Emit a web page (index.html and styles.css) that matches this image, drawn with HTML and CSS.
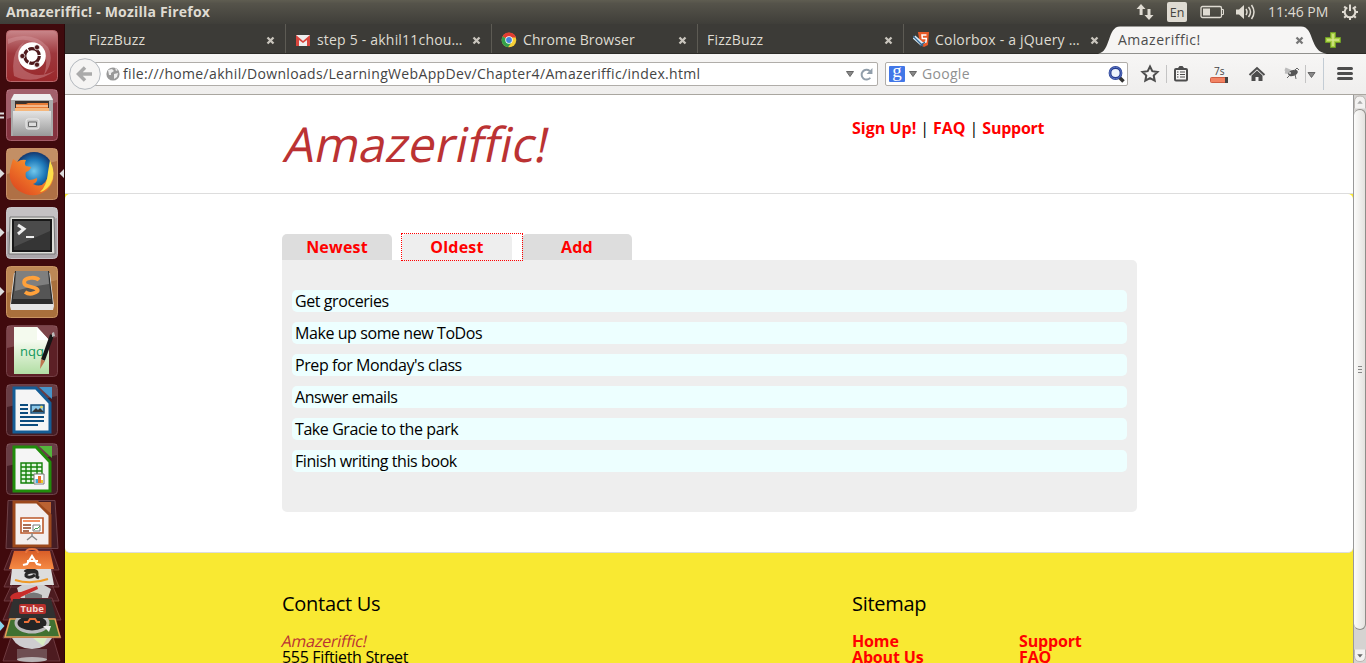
FILE: index.html
```html
<!DOCTYPE html>
<html lang="en">
<head>
<meta charset="utf-8">
<title>Amazeriffic!</title>
<link rel="stylesheet" href="styles.css">
</head>
<body>
<div class="desktop">
  <header class="topbar">
    <span class="window-title">Amazeriffic! - Mozilla Firefox</span>
    <div class="indicators">
      <svg width="18" height="18" viewBox="0 0 18 18"><g fill="#dfdbd2"><path d="M5 1L9.500 6H6.600V12H3.600V6H.5zM13 17L8.500 12H11.500V6H14.500V12H17.500z"/></g></svg>
      <span class="lang">En</span>
      <svg class="battery" width="25" height="14" viewBox="0 0 25 14"><rect x="1" y="1.500" width="20.500" height="11" rx="1.500" fill="none" stroke="#dfdbd2" stroke-width="1.300"/><path d="M3 3.500h7v7H3z" fill="#dfdbd2"/><path d="M22 4.500h1.500v5H22" fill="none" stroke="#dfdbd2"/></svg>
      <svg class="sound" width="21" height="18" viewBox="0 0 21 18"><path d="M1 6.500h3L9 2v14L4 11.500H1z" fill="#dfdbd2"/><path d="M11 6q2 3 0 6M13.500 4q4 5 0 10M16.500 2q5 7 0 14" fill="none" stroke="#dfdbd2" stroke-width="1.500"/></svg>
      <span class="clock">11:46 PM</span>
      <svg width="18" height="18" viewBox="0 0 18 18"><g stroke="#dfdbd2" fill="none" stroke-width="2"><path d="M6.300 4.500a5.300 5.300 0 1 0 5.400 0M9 1.500V8"/><path d="M1 9h3M14 9h3M9 14v3M3.200 3.500l2 2M14.800 3.500l-2 2M3.200 14.700l2-2M14.800 14.700l-2-2"/></g></svg>
    </div>
  </header>

  <div class="workspace">
    <nav class="launcher">
      <svg class="tile" viewBox="0 0 52 52"><defs><linearGradient id="dash" x2="0" y2="1"><stop stop-color="#c9868a"/><stop offset=".45" stop-color="#9e383d"/><stop offset="1" stop-color="#9a282b"/></linearGradient><linearGradient id="metal" x2="0" y2="1"><stop stop-color="#e4e4e4"/><stop offset="1" stop-color="#999"/></linearGradient></defs>
        <rect x=".5" y=".5" width="51" height="51" rx="4" fill="url(#dash)" stroke="#b9686c"/>
        <path d="M2 9Q27 0 42 17Q49 31 38 45Q44 26 34 17Q21 4 2 14z" fill="#d9a0a4" opacity=".4"/><path d="M8 46Q4 22 18 12Q8 30 18 40Q32 50 50 40Q29 56 8 46" fill="#d9a0a4" opacity=".4"/>
        <circle cx="26" cy="26" r="13.800" fill="#fff"/><circle cx="26" cy="26" r="7.300" fill="none" stroke="#4e191c" stroke-width="3.200" stroke-dasharray="14 1.300"/><g fill="#4e191c" stroke="#fff" stroke-width=".7"><circle cx="16.400" cy="26" r="2.600"/><circle cx="31" cy="17.300" r="2.600"/><circle cx="31" cy="34.700" r="2.600"/></g></svg>
      <svg class="tile" viewBox="0 0 52 52"><rect x=".5" y=".5" width="51" height="51" rx="4" fill="#84333f" stroke="#a45d69"/><path d="M1 1h50v12L1 30z" fill="#d9b5bd" opacity=".35"/>
        <path d="M8 5h36l3 5v37H5V10z" fill="#aaa"/><path d="M8 5h36l3 6H5z" fill="#eee"/><path d="M9 12h34v10H9z" fill="#3a302c"/><path d="M10 15h10l2-1h20v8H10z" fill="#e87c36"/><path d="M10 17h32" stroke="#fff2dd"/><path d="M9 19h34v3H9z" fill="#f5b77c"/><path d="M7 22h38v25H7z" fill="url(#metal)"/><rect x="20" y="30" width="13" height="10" rx="2" fill="#c7c7c7" stroke="#eee"/><path d="M22.500 33h8v4.500h-8z" fill="#ddd" stroke="#666"/></svg>
      <svg class="tile" viewBox="0 0 52 52"><defs><radialGradient id="globe"><stop stop-color="#72c8ec"/><stop offset=".6" stop-color="#1d78b9"/><stop offset="1" stop-color="#12376f"/></radialGradient><linearGradient id="fox" x1="0" x2="1" y1="1" y2="0"><stop stop-color="#d83c1e"/><stop offset=".6" stop-color="#f4822a"/><stop offset="1" stop-color="#ffe04c"/></linearGradient></defs>
        <rect x=".5" y=".5" width="51" height="51" rx="4" fill="#af7045" stroke="#c69068"/><path d="M1 1h50v12L1 26z" fill="#e0bd97" opacity=".4"/><circle cx="28" cy="23" r="19" fill="url(#globe)"/>
        <path d="M7 11Q9 12 11 14Q15 11 20 12Q18 16 20 18L25 19Q24 23 20 24Q18 29 23 32Q27 32 31 30Q32 34 27 36Q39 42 43 25L44 15Q52 31 41 42Q28 52 13 43Q0 34 5 18z" fill="url(#fox)"/><path d="M44 12Q51 26 44 37Q38 44 34 44Q41 38 42 24z" fill="#ffdf49"/></svg>
      <svg class="tile" viewBox="0 0 52 52"><rect x=".5" y=".5" width="51" height="51" rx="4" fill="#aaa5a9" stroke="#c7c2c6"/><path d="M1 1h50v10L1 25z" fill="#ddd" opacity=".5"/><path d="M4 10h44l1 37H3z" fill="#deded9" stroke="#777"/><path d="M7 13h38v31H7z" fill="#353535" stroke="#181818" stroke-width="2"/><path d="M8 14h36v10L8 40z" fill="#666" opacity=".45"/><path d="M12 18l6 4-6 5" fill="none" stroke="#eee" stroke-width="3"/><path d="M20 30h8" stroke="#eee" stroke-width="2"/></svg>
      <svg class="tile" viewBox="0 0 52 52"><rect x=".5" y=".5" width="51" height="51" rx="4" fill="#a96f3c" stroke="#c99462"/><path d="M1 1h50v13L1 27z" fill="#e2b887" opacity=".35"/><path d="M8 7h36l4 33-1 4H5l-1-4z" fill="#e4e4e4"/><path d="M9 5h34l4 33H5z" fill="#2c2c2c"/><path d="M10 5h32l3 28H7z" fill="#555"/><path d="M10 5h32l1 13Q26 20 9 25z" fill="#aaa" opacity=".5"/><path d="M33 14Q30 11 24 12C16 13 17 19 22 20L29 22Q35 25 28 27Q23 29 19 26" stroke="#ffa13b" stroke-width="3.800" fill="none"/></svg>
      <svg class="tile" viewBox="0 0 52 52"><defs><linearGradient id="note" x2="0" y2="1"><stop offset=".3" stop-color="#f4faee"/><stop offset="1" stop-color="#b2dea4"/></linearGradient></defs><rect x=".5" y=".5" width="51" height="51" rx="4" fill="#5c2026" stroke="#744046"/><path d="M1 1h50v11L1 23z" fill="#b98b91" opacity=".35"/><path d="M8 2h23l12 13v34H8z" fill="url(#note)"/><path d="M31 2v13h12z" fill="#fff"/><text class="nqq" x="14" y="31">nqq</text><path d="M46 10L37 35" stroke="#161616" stroke-width="4"/><path d="M46 8l2-1 1 4-3 1z" fill="#bbb"/><path d="M35 34l4 2-5 8z" fill="#bd7550"/></svg>
      <svg class="tile" viewBox="0 0 52 52"><rect x=".5" y=".5" width="51" height="51" rx="4" fill="#451d24" stroke="#6f4248"/><path d="M1 1h50v11L1 23z" fill="#b98b91" opacity=".3"/><path d="M8 4h22l14 15v29H8z" fill="#f5f5f5" stroke="#155d96" stroke-width="3"/><path d="M33 3h13v12z" fill="#4794c9"/><path d="M14 21h8M14 25h8M14 29h8M14 33h24M14 37h24M14 41h18" stroke="#0c4c7e" stroke-width="2"/><path d="M25 21h13v8H25z" fill="#8ac7e7" stroke="#164d79" stroke-width="1.500"/><path d="M26 28l4-4 2 2 2-2 4 4z" fill="#333"/><circle cx="35.500" cy="23" r="1.300" fill="#ead34f"/></svg>
      <svg class="tile" viewBox="0 0 52 52"><rect x=".5" y=".5" width="51" height="51" rx="4" fill="#451d24" stroke="#6f4248"/><path d="M1 1h50v11L1 23z" fill="#b98b91" opacity=".3"/><path d="M8 4h22l14 15v29H8z" fill="#f5f5f5" stroke="#218c0b" stroke-width="3"/><path d="M33 3h13v12z" fill="#54b53c"/><path d="M15 20h21v20H15zM15 24h21M15 28h21M15 32h21M15 36h21M20 20v20M25 20v20M31 20v20" fill="#e2f6df" stroke="#138009" stroke-width="1.400"/><path d="M28 31h10v10H28z" fill="#fff" stroke="#777"/><path d="M29.500 40v-4H32v4" fill="#44a6d6"/><path d="M32 40v-7h3v7" fill="#ea742a"/><path d="M35 40v-3h2v3" fill="#eac629"/></svg>
      <svg class="stack" viewBox="0 0 64 163"><defs><linearGradient id="orange" x2="0" y2="1"><stop stop-color="#d95e28"/><stop offset="1" stop-color="#f58a44"/></linearGradient></defs>
        <path d="M8 .5h47l3 48H6z" fill="#451d24" stroke="#6f4248"/><path d="M14 2h23l13 13v31H14z" fill="#f4eeee" stroke="#9c481c" stroke-width="3"/><path d="M38 2h13v12z" fill="#ba6232"/><path d="M21 18h22v15H21z" fill="#fff" stroke="#bb582b" stroke-width="1.600"/><path d="M23 21h17" stroke="#f39261" stroke-width="2"/><path d="M23 25h8M23 28h8M23 31h6" stroke="#91411f" stroke-width="1.500"/><path d="M33 25h7v6h-7z" fill="#fff" stroke="#777"/><path d="M34 30l2-2 1 1 3-3" fill="none" stroke="#44a052"/><path d="M32 33v3M32 36l-5 4M32 36l5 4" stroke="#888" stroke-width="1.500"/>
        <g fill="#4d1b20" stroke="#774249" stroke-width=".8"><path d="M12 50h40l7 20H4zM13 67h38l8 20H4zM13 82h38l8 19H4zM12 98h40l9 22H3zM11 118h42l8 20H3zM12 134h40l8 27H3z"/></g>
        <path d="M12 69h39l3 16H10z" fill="#ddd"/><path d="M25 72q1-2 6-2 6 0 6 3v4l2 1M36 72h-5q-6 1-5 4 3 3 9-1" fill="none" stroke="#282828" stroke-width="3"/><path d="M15 80q16 5 33-1" fill="none" stroke="#ef9a26" stroke-width="2"/>
        <path d="M14 51h36l4 18H9z" fill="url(#orange)"/><path d="M26 53q0-4 6-4t6 4" fill="none" stroke="#e7743e" stroke-width="2"/><path d="M23 65l4-1 5-8 5 8 4 1M27 61h11" fill="none" stroke="#fff" stroke-width="2.200"/>
        <path d="M17 88l5-3h22l7 4-3 9H20z" fill="#d0d0d0"/><path d="M25 95q9-5 17 0v3H25z" fill="#777"/><path d="M10 97q3-5 11-5l16-6 1 3-17 8q-3 6-9 5z" fill="#c92d2b"/>
        <path d="M10 119h45l5 18H5z" fill="#407131" stroke="#e4a158" stroke-width="1.500"/><ellipse cx="32" cy="123" rx="16" ry="9" fill="#252525" stroke="#bbb" stroke-width="3"/><path d="M24 122h4l2-3h5l2 3h3" fill="none" stroke="#ee7139" stroke-width="2"/><path d="M43 126h8l-2 6z" fill="#eee"/>
        <path d="M13 99h38l5 19H8z" fill="#303030"/><rect x="19" y="104" width="27" height="10" rx="2" fill="#b62f2c"/><text class="tube" x="20.500" y="112">Tube</text>
        <path d="M0 121l4.500 5L0 131z" fill="#8ad4ed"/><path d="M12 138h40q-6 11-20 11T12 138" fill="#cfcdd0"/><path d="M33 138h14l-4 8z" fill="#d7edc4"/><path d="M17 149h30v11q-15 5-30 0z" fill="#7c6468" opacity=".7"/><ellipse cx="32" cy="159.500" rx="15" ry="2.500" fill="#b9b3b4"/></svg>
      <svg class="markers" viewBox="0 0 64 300"><g fill="#ddd"><path d="M0 88.500h4v2H0zM0 92.500h4v2H0zM0 145l4.500 4.500L0 154zM64 145l-4.500 4.500L64 154zM0 204l4.500 4.500L0 213zM0 263l4.500 4.500L0 272z"/></g></svg>
    </nav>

    <div class="browser">
      <div class="tabstrip">
        <div class="tab first"><span class="label">FizzBuzz</span><svg class="close" viewBox="0 0 9 9"><path d="M1.500 1.500l6 6M7.500 1.500l-6 6"/></svg></div>
        <div class="tab"><svg class="fav" viewBox="0 0 16 16"><path d="M1 3h14v11H1z" fill="#eee"/><path d="M1 14V3l7 6 7-6v11h-3V8l-4 3-4-3v6z" fill="#d8453d"/></svg><span class="label">step 5 - akhil11chou…</span><svg class="close" viewBox="0 0 9 9"><path d="M1.500 1.500l6 6M7.500 1.500l-6 6"/></svg></div>
        <div class="tab"><svg class="fav" viewBox="0 0 16 16"><circle cx="8" cy="8" r="7.300" fill="#f5cf37"/><path d="M8 8L1.500 4.500A7.300 7.300 0 0 1 15 5.500H8z" fill="#e13c32"/><path d="M8 8L1.500 4.500A7.300 7.300 0 0 0 7 15.300l3-4z" fill="#34a14a"/><circle cx="8" cy="8" r="3.700" fill="#fff"/><circle cx="8" cy="8" r="2.900" fill="#4284d8"/></svg><span class="label chrome">Chrome Browser</span><svg class="close" viewBox="0 0 9 9"><path d="M1.500 1.500l6 6M7.500 1.500l-6 6"/></svg></div>
        <div class="tab"><span class="label">FizzBuzz</span><svg class="close" viewBox="0 0 9 9"><path d="M1.500 1.500l6 6M7.500 1.500l-6 6"/></svg></div>
        <div class="tab"><svg class="fav" viewBox="0 0 16 16"><path d="M5 0h11l-1 13-4 2-4-2z" fill="#e65a28"/><path d="M13.500 3H9l.3 3.500h4L13 10l-3 1" fill="none" stroke="#fff" stroke-width="1.500"/><path d="M1 5l8 7" stroke="#dceefa" stroke-width="4"/><path d="M0 4l10 10M7 14l5-4" stroke="#33658f" stroke-width="1.300"/></svg><span class="label">Colorbox - a jQuery …</span><svg class="close" viewBox="0 0 9 9"><path d="M1.500 1.500l6 6M7.500 1.500l-6 6"/></svg></div>
        <div class="tab active"><svg class="tab-shape" viewBox="0 0 230 29"><path d="M0 29C13 28 9 2 22 2H203C217 2 211 28 229 29z" fill="#f6f5f4"/></svg><span class="label">Amazeriffic!</span><svg class="close" viewBox="0 0 9 9"><path d="M1.500 1.500l6 6M7.500 1.500l-6 6"/></svg></div>
        <svg class="newtab" viewBox="0 0 16 16"><path d="M5.500.5h5v5h5v5h-5v5h-5v-5h-5v-5h5z" fill="#a8cf43" stroke="#6f9d25"/><path d="M8 2v12M2 8h12" stroke="#d3e88a" stroke-width="1.500"/></svg>
      </div>

      <div class="toolbar">
        <svg class="back" viewBox="0 0 32 32"><circle cx="16" cy="16" r="15.300" fill="#f5f4f3" stroke="#b3b8be"/><path d="M16 9.500L9.500 16l6.500 6.500M10 16h13" fill="none" stroke="#aaa" stroke-width="3.500"/></svg>
        <div class="field url">
          <svg class="site" viewBox="0 0 14 14"><circle cx="7" cy="7" r="6.600" fill="#999"/><path d="M2 3l4-1 2 2-3 2v2H3zM8 7l4-1-1 4-3 2zM9 1l3 2-2 1z" fill="#eee"/></svg>
          <span class="address">file:///home/akhil/Downloads/LearningWebAppDev/Chapter4/Amazeriffic/index.html</span>
          <svg class="drop" viewBox="0 0 8 6"><path d="M.5.5h7L4 5.500z" fill="#888" stroke="#666"/></svg>
          <svg class="reload" viewBox="0 0 12 12"><path d="M9.500 9A4.500 4.500 0 1 1 9 2.800" fill="none" stroke="#919eaa" stroke-width="1.800"/><path d="M11.500 0v5.500H6z" fill="#919eaa"/></svg>
        </div>
        <div class="field search">
          <span class="g">g</span>
          <svg class="drop" viewBox="0 0 8 6"><path d="M.5.5h7L4 5.500z" fill="#888" stroke="#666"/></svg>
          <span class="hint">Google</span>
          <svg class="lens" viewBox="0 0 17 17"><path d="M11 11l4.500 4.500" stroke="#333" stroke-width="3.500"/><circle cx="7.500" cy="7" r="5.500" fill="#edf3fc" stroke="#253c91" stroke-width="2.800"/><circle cx="7.500" cy="7" r="5.800" fill="none" stroke="#6c87d1" stroke-width=".8"/></svg>
        </div>
        <svg class="actions" viewBox="0 0 226 40">
          <path d="M10 12.500l2.300 4.700 5.200.7-3.800 3.600 1 5.200-4.700-2.500-4.700 2.500 1-5.200-3.800-3.600 5.200-.7z" fill="none" stroke="#4d4d4d" stroke-width="2"/>
          <path d="M26.500 11v18M165.500 11v18" stroke="#c4c4c4"/><path d="M183.500 4v32" stroke="#c3ccd4"/>
          <rect x="35" y="15" width="12" height="11.500" rx="1" fill="#f6f5f4" stroke="#4d4d4d" stroke-width="2"/><path d="M38 14l1.500-2h3l1.500 2v2h-6z" fill="#4d4d4d"/><path d="M37 18h1.500M40 18h5M37 20.500h1.500M40 20.500h5M37 23h1.500M40 23h5" stroke="#4d4d4d" stroke-width="1.200"/>
          <text class="seconds" x="74" y="21">7s</text><rect x="70.500" y="23.500" width="16" height="5" rx="1" fill="#f28262" stroke="#cf5e42"/><path d="M85 23h3v6h-3z" fill="#444"/>
          <path d="M109.500 21l7.500-7 7.500 7" fill="none" stroke="#4d4d4d" stroke-width="2"/><path d="M111.500 21.500l5.500-5 5.500 5V27h-4v-4h-3v4h-4z" fill="#4d4d4d"/>
          <path d="M145 15l7 3M145 18l7 1" stroke="#bbb" stroke-width="3"/><ellipse cx="153" cy="19" rx="5" ry="3" fill="#555" transform="rotate(-20 153 19)"/><path d="M151 20l-4 4M155 20l1 5M154 17l3-3 2 2" fill="none" stroke="#666"/><circle cx="150" cy="19" r="1" fill="#ddd"/>
          <path d="M168 18.500h7l-3.500 5z" fill="#888" stroke="#666"/>
          <path d="M198.500 14.500h13M198.500 19.500h13M198.500 24.500h13" stroke="#4d4d4d" stroke-width="3" stroke-linecap="round"/>
        </svg>
      </div>

      <div class="viewport">
        <div class="page">
          <div class="site-header"><h1><span>Amazeriffic!</span></h1><div class="site-nav"><a>Sign Up!</a><span>|</span><a>FAQ</a><span>|</span><a class="tight">Support</a></div></div>
          <main class="site-main">
            <div class="tabs"><a>Newest</a><a class="current">Oldest</a><a>Add</a></div>
            <div class="content">
              <p>Get groceries</p>
              <p>Make up some new ToDos</p>
              <p>Prep for Monday's class</p>
              <p>Answer emails</p>
              <p>Take Gracie to the park</p>
              <p>Finish writing this book</p>
            </div>
          </main>
          <footer class="site-footer">
            <div class="contact"><h2>Contact Us</h2><p><em>Amazeriffic!</em><br><span>555 Fiftieth Street</span></p></div>
            <div class="sitemap"><h2>Sitemap</h2><div class="columns"><p><a>Home</a><br><a>About Us</a></p><p><a>Support</a><br><a>FAQ</a></p></div></div>
          </footer>
        </div>
        <div class="scrollbar">
          <svg class="arrow up" viewBox="0 0 13 14"><path d="M.5 14V7Q.5.500 6.500.5T12.500 7v7" fill="#f3f2f1" stroke="#b5b1ad"/><path d="M3.500 9L6.500 5.500 9.500 9z" fill="#aaa"/></svg>
          <div class="thumb"><i></i><i></i><i></i></div>
          <svg class="arrow down" viewBox="0 0 13 14"><path d="M.5 0v6.500q0 6.500 6 6.500t6-6.500V0" fill="#f3f2f1" stroke="#b5b1ad"/><path d="M3.500 5h6l-3 3.500z" fill="#666"/></svg>
        </div>
      </div>
    </div>
  </div>
</div>
</body>
</html>
```

FILE: styles.css
```css
*, *::after { box-sizing: border-box; }
html, body { margin: 0; overflow: hidden; }
body { font: 14px/18px "Open Sans", "Noto Sans", sans-serif; }
svg { display: block; flex: none; }
h1, h2, p { margin: 0; font-weight: 400; }

.desktop { width: 1366px; height: 663px; overflow: hidden; display: flex; flex-direction: column; white-space: nowrap; background: #3c3b37; }
.topbar { height: 24px; flex: none; display: flex; align-items: center; justify-content: space-between; padding: 0 7px 0 6px; color: #dfdbd2; background: linear-gradient(#5f5d51, #55534a 15%, #3f3e39); }
.window-title { font-size: 14px; font-weight: 700; letter-spacing: .2px; }
.indicators { display: flex; align-items: center; }
.lang { width: 20px; height: 20px; margin-left: 13px; background: #dfdbd2; color: #45443f; border-radius: 2px; font-size: 12.500px; line-height: 21px; text-align: center; }
.battery { margin-left: 13px; }
.sound { margin-left: 10px; }
.clock { width: 61px; margin: 0 12px 0 12px; font-size: 14px; }

.workspace { flex: 1; min-height: 0; display: flex; }
.launcher { position: relative; width: 65px; flex: none; padding: 6px 0 0 6px; display: flex; flex-direction: column; background: #400a0d; border-right: 1px solid #2b0709; }
.tile { width: 52px; height: 52px; margin-bottom: 7px; }
.stack { width: 64px; height: 163px; margin: -2px 0 0 -6px; }
.markers { position: absolute; left: 0; top: 0; width: 64px; height: 300px; }
.nqq { font: 13px "Open Sans", sans-serif; fill: #13985c; }
.tube { font: bold 9.500px "Open Sans", sans-serif; fill: #f4d6d2; }

.browser { flex: 1; min-width: 0; display: flex; flex-direction: column; }
.tabstrip { height: 30px; flex: none; display: flex; padding-left: 14px; background: #3c3b37; border-bottom: 1px solid #2d2c28; }
.tab { position: relative; width: 206px; flex: none; display: flex; align-items: center; padding: 3px 10px 0 9px; color: #dfdbd2; border-left: 1px solid #5d5b54; }
.tab.first, .tab.active { border-color: transparent; }
.fav { width: 16px; height: 16px; margin-right: 6px; }
.label { position: relative; font-size: 14px; letter-spacing: .2px; }
.label.chrome { letter-spacing: .1px; }
.close { position: relative; width: 9px; height: 9px; margin-left: auto; stroke: #c9c5bd; stroke-width: 2.300; fill: none; }
.tab.active { color: #4c4c4c; width: 205px; padding-left: 8px; }
.tab.active .label { letter-spacing: .5px; }
.tab.active .close { stroke: #777; }
.tab-shape { position: absolute; left: -12px; top: 0; width: 230px; height: 30px; }
.newtab { position: relative; width: 16px; height: 16px; margin: 8px 0 0 11px; }

.toolbar { height: 41px; flex: none; display: flex; align-items: center; padding-left: 4px; background: linear-gradient(#f7f6f5, #efeeed); border-bottom: 1px solid #a9a6a0; }
.back { position: relative; width: 32px; height: 32px; z-index: 1; }
.field { height: 24px; display: flex; align-items: center; background: #fff; border: 1px solid #b0ada9; border-radius: 2px; }
.url { width: 784px; margin-left: -7px; padding: 0 4px 0 11px; }
.site { width: 14px; height: 14px; }
.address { margin-left: 3px; color: #444; letter-spacing: .335px; }
.drop { width: 8px; height: 6px; }
.url .drop { margin-left: auto; }
.reload { width: 13px; height: 13px; margin-left: 6px; }
.search { width: 243px; margin-left: 7px; padding: 0 2px 0 3px; }
.g { width: 16px; height: 16px; margin-right: 4px; background: #4277e8; color: #fff; border-radius: 1px; font: 19px/10px "Liberation Serif", serif; text-align: center; }
.hint { margin-left: 5px; color: #909090; letter-spacing: .3px; }
.lens { width: 17px; height: 17px; margin-left: auto; }
.actions { width: 226px; height: 40px; margin-left: 12px; }
.seconds { font: 10px "Open Sans", sans-serif; fill: #444; }

.viewport { flex: 1; min-height: 0; display: flex; }
.page { width: 1288px; flex: none; overflow: hidden; background: #f9e932; color: #000; font-size: 16px; }
.site-header { height: 99px; display: flex; padding-left: 217px; background: #fff; border-bottom: 1px solid #ddd; }
h1 { width: 570px; padding-left: 4px; color: #bb3233; font: 48px/98px "Open Sans", "Noto Sans", sans-serif; }
h1 span { display: inline-block; transform: skewX(-12deg); letter-spacing: .05px; }
.site-nav { display: flex; gap: 4px; padding-top: 24px; }
a { color: #f00; font-weight: 700; }
.site-nav .tight { letter-spacing: -.25px; }
.site-main { height: 359px; padding: 40px 216px 0 217px; background: #fff; border-bottom: 1px solid #ddd; border-radius: 5px; }
.tabs { display: flex; gap: 10px; }
.tabs a { width: 110px; height: 26px; line-height: 26px; text-align: center; background: #ddd; border-radius: 5px 5px 0 0; letter-spacing: .2px; }
.tabs .current { position: relative; background: #eee; }
.current::after { content: ""; position: absolute; left: -1px; top: -1px; width: 122px; height: 28px; border: 1px dotted #f00; }
.content { height: 252px; padding: 30px 10px; background: #eee; border-radius: 0 5px 5px 5px; }
.content p { height: 22px; margin-bottom: 10px; padding-left: 3px; line-height: 22px; letter-spacing: -.42px; background: #edffff; border-radius: 5px; }
.site-footer { display: flex; padding: 38px 0 0 217px; line-height: 16px; }
.contact { width: 570px; }
.contact p { letter-spacing: -.33px; }
h2 { font-size: 20px; line-height: 26px; margin-bottom: 16px; letter-spacing: -.28px; }
em { display: inline-block; color: #bb3233; font-style: normal; transform: skewX(-12deg); letter-spacing: -.22px; }
.columns { display: flex; }
.columns p { width: 167px; letter-spacing: -.15px; }

.scrollbar { width: 13px; display: flex; flex-direction: column; background: #d5d3d1; border-left: 1px solid #999; }
.arrow { width: 12px; height: 14px; }
.thumb { height: 521px; display: flex; flex-direction: column; align-items: center; justify-content: center; gap: 2px; background: linear-gradient(90deg, #fcfcfb, #e4e2df); border: 1px solid #8f8d89; border-left: 0; border-radius: 6px; }
.thumb i { width: 4px; height: 1px; background: #888; }
.down { margin-top: auto; }
```
